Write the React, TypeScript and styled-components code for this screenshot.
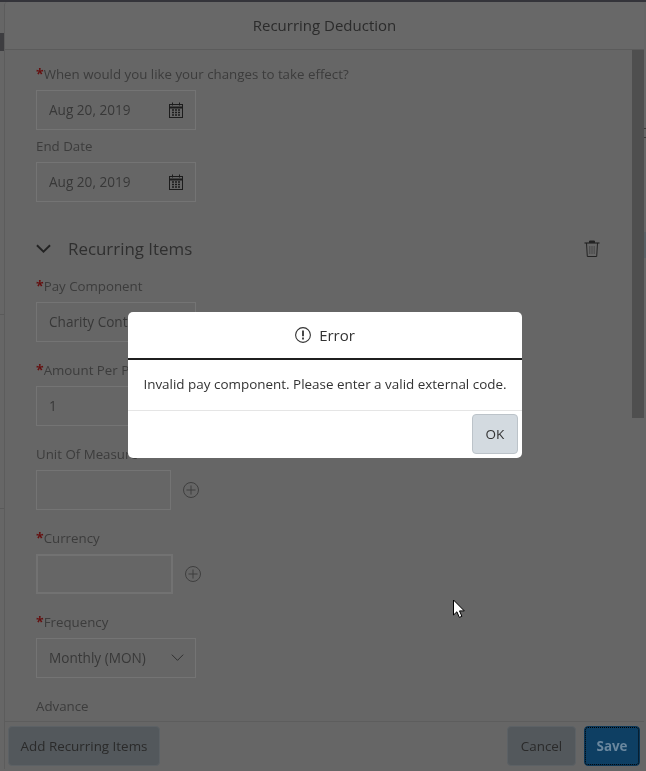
import styled, { createGlobalStyle } from "styled-components";

const GlobalStyle = createGlobalStyle`
    html, body {
        margin: 0;
        padding: 0;
        height: 100%;
        overflow: hidden;
    }
    body {
        font-family: "Open Sans", "Noto Sans", sans-serif;
        background-color: #666666;
    }
    * {
        box-sizing: border-box;
    }
`;

const Page = styled.div`
    position: relative;
    width: 646px;
    height: 771px;
    padding: 2px 2px 2px 4px;
    overflow: hidden;
    background:
        linear-gradient(#34343a, #34343a) 0 0 / 100% 2px no-repeat,
        linear-gradient(#3d3d40, #3d3d40) 0 33px / 4px 18px no-repeat,
        linear-gradient(#5a5a5a, #5a5a5a) 0 314px / 4px 1px no-repeat,
        linear-gradient(#5a5a5a, #5a5a5a) 0 508px / 4px 1px no-repeat,
        linear-gradient(#596064, #596064) 644px 232px / 2px 26px no-repeat,
        linear-gradient(#3a3a3a, #3a3a3a) 644px 128px / 2px 1px no-repeat,
        linear-gradient(#3a3a3a, #3a3a3a) 644px 137px / 2px 1px no-repeat,
        #666666;
`;

const Modal = styled.div`
    width: 640px;
    height: 767px;
    display: flex;
    flex-direction: column;
    background-color: #666666;
    border-left: 1px solid #5c5c5c;
    border-radius: 4px 4px 0 0;
    overflow: hidden;
    will-change: transform;
`;

const ModalHeader = styled.header`
    flex: none;
    height: 48px;
    padding-bottom: 2px;
    display: flex;
    align-items: center;
    justify-content: center;
    background-color: #686868;
    border-bottom: 1px solid #5b5b5b;
    color: #2b2b2b;
    font-size: 15px;
`;

const ModalMiddle = styled.div`
    flex: 1;
    min-height: 0;
    display: flex;
    overflow: hidden;
`;

const ModalBody = styled.div`
    flex: 1;
    min-width: 0;
    padding: 14px 32px 0 31px;
`;

const Scrollbar = styled.div`
    flex: none;
    width: 12px;
`;

const ScrollThumb = styled.div`
    height: 368px;
    background-color: #4f4f4f;
`;

const Field = styled.div<{ $gap?: number }>`
    display: flex;
    flex-direction: column;
    gap: 6px;
    margin-bottom: ${(p) => p.$gap ?? 18}px;
`;

const Label = styled.label`
    height: 20px;
    line-height: 20px;
    font-size: 13.3px;
    color: #3c3c3c;
`;

const Star = styled.span`
    color: #650f0f;
    font-weight: 700;
    font-size: 14px;
`;

const InputRow = styled.div`
    display: flex;
    align-items: center;
    gap: 12px;
`;

const Input = styled.div<{ $width?: number; $strong?: boolean }>`
    width: ${(p) => p.$width ?? 160}px;
    height: 40px;
    padding: 0 11px 1px 12px;
    display: flex;
    align-items: center;
    justify-content: space-between;
    border: ${(p) => (p.$strong ? "2px solid #727272" : "1px solid #747474")};
    font-size: 13.6px;
    color: #383838;
    white-space: nowrap;
    overflow: hidden;
`;

const SectionHeading = styled.div`
    height: 40px;
    margin: 27px 0 7px;
    padding-bottom: 2px;
    display: flex;
    align-items: center;
    justify-content: space-between;
`;

const SectionTitle = styled.div`
    display: flex;
    align-items: center;
    gap: 17px;
    font-size: 16.9px;
    color: #2f2f2f;
`;

const Footer = styled.footer`
    flex: none;
    height: 48px;
    padding: 4px 4px 3px 3px;
    display: flex;
    justify-content: space-between;
    border-top: 1px solid #5d5d5d;
`;

const ButtonGroup = styled.div`
    display: flex;
    gap: 8px;
`;

const Button = styled.div<{ $width: number; $primary?: boolean }>`
    width: ${(p) => p.$width}px;
    height: 40px;
    display: flex;
    align-items: center;
    justify-content: center;
    border-radius: 4px;
    font-size: 13.4px;
    white-space: nowrap;
    background-color: ${(p) => (p.$primary ? "#0e3f63" : "#53585c")};
    border: 1px solid ${(p) => (p.$primary ? "#0b3656" : "#5c6165")};
    color: ${(p) => (p.$primary ? "#6a879e" : "#2a2a2a")};
    font-weight: ${(p) => (p.$primary ? 700 : 400)};
    outline: ${(p) => (p.$primary ? "1px dotted #000000" : "none")};
    outline-offset: -2px;
`;

const Dialog = styled.div`
    position: absolute;
    left: 128px;
    top: 312px;
    width: 394px;
    height: 146px;
    display: flex;
    flex-direction: column;
    background-color: #ffffff;
    border-radius: 5px;
    overflow: hidden;
    will-change: transform;
`;

const DialogHeader = styled.div`
    flex: none;
    height: 48px;
    display: flex;
    align-items: center;
    justify-content: center;
    gap: 8px;
    border-bottom: 2px solid #1f1f1f;
    color: #333333;
    font-size: 15px;
`;

const DialogBody = styled.div`
    flex: none;
    height: 51px;
    padding-bottom: 2px;
    display: flex;
    align-items: center;
    justify-content: center;
    border-bottom: 1px solid #e5e5e5;
    color: #333333;
    font-size: 13.45px;
    white-space: nowrap;
`;

const DialogFooter = styled.div`
    flex: 1;
    padding: 3px 4px;
    display: flex;
    justify-content: flex-end;
`;

const OkButton = styled.div`
    width: 46px;
    height: 40px;
    display: flex;
    align-items: center;
    justify-content: center;
    background-color: #d3dae0;
    border: 1px solid #bcc3c9;
    border-radius: 4px;
    color: #333333;
    font-size: 13.5px;
`;

const Cursor = styled.svg`
    position: absolute;
    left: 452px;
    top: 599px;
`;

const CalendarIcon = () => (
    <svg width="16" height="16" viewBox="0 0 16 16" fill="none" stroke="#1c1c1c">
        <rect x="1.5" y="2.5" width="13" height="13" />
        <path d="M1.5 5.5h13" strokeWidth="2" />
        <path d="M4.5 0.5v3M11.5 0.5v3" />
        <path
            d="M4 8h2M7 8h2M10 8h2M4 10.5h2M7 10.5h2M10 10.5h2M4 13h2M7 13h2M10 13h2"
            strokeWidth="1.3"
        />
    </svg>
);

const TrashIcon = () => (
    <svg width="16" height="17" viewBox="0 0 16 17" fill="none" stroke="#232323">
        <path d="M0.5 3h15" strokeWidth="1.2" />
        <path d="M5.5 3V1h5v2" fill="#232323" />
        <path d="M2.5 3l0.8 13.5h9.4L13.5 3" />
        <path d="M5.8 6v8M8 6v8M10.2 6v8" strokeWidth="0.9" stroke="#444444" />
    </svg>
);

const PlusCircleIcon = () => (
    <svg width="16" height="16" viewBox="0 0 16 16" fill="none" stroke="#3f3f3f">
        <circle cx="8" cy="8" r="7.5" />
        <path d="M8 3.5v9M3.5 8h9" />
    </svg>
);

const ChevronIcon = ({ size, width, colour }: { size: number; width: number; colour: string }) => (
    <svg width={size} height={size} viewBox="0 0 16 16" fill="none" stroke={colour} strokeWidth={width}>
        <path d="M1 4.5l7 7 7-7" />
    </svg>
);

const AlertIcon = () => (
    <svg width="16" height="16" viewBox="0 0 16 16" fill="none" stroke="#333333">
        <circle cx="8" cy="8" r="7.4" strokeWidth="1.1" />
        <path d="M8 3.6v5.6" strokeWidth="1.8" />
        <path d="M8 10.6v1.8" strokeWidth="1.8" />
    </svg>
);

const App = () => {
    return (
        <Page>
            <GlobalStyle />
            <Modal>
                <ModalHeader>Recurring Deduction</ModalHeader>
                <ModalMiddle>
                    <ModalBody>
                        <Field $gap={6}>
                            <Label>
                                <Star>*</Star>When would you like your changes to take effect?
                            </Label>
                            <Input>
                                Aug 20, 2019
                                <CalendarIcon />
                            </Input>
                        </Field>
                        <Field $gap={0}>
                            <Label>End Date</Label>
                            <Input>
                                Aug 20, 2019
                                <CalendarIcon />
                            </Input>
                        </Field>
                        <SectionHeading>
                            <SectionTitle>
                                <ChevronIcon size={15} width={2} colour="#232323" />
                                Recurring Items
                            </SectionTitle>
                            <TrashIcon />
                        </SectionHeading>
                        <Field>
                            <Label>
                                <Star>*</Star>Pay Component
                            </Label>
                            <Input>Charity Contribution</Input>
                        </Field>
                        <Field>
                            <Label>
                                <Star>*</Star>Amount Per Payment
                            </Label>
                            <Input>1</Input>
                        </Field>
                        <Field>
                            <Label>Unit Of Measure</Label>
                            <InputRow>
                                <Input $width={135} />
                                <PlusCircleIcon />
                            </InputRow>
                        </Field>
                        <Field>
                            <Label>
                                <Star>*</Star>Currency
                            </Label>
                            <InputRow>
                                <Input $width={137} $strong />
                                <PlusCircleIcon />
                            </InputRow>
                        </Field>
                        <Field>
                            <Label>
                                <Star>*</Star>Frequency
                            </Label>
                            <Input>
                                Monthly (MON)
                                <ChevronIcon size={13} width={1.2} colour="#2f2f2f" />
                            </Input>
                        </Field>
                        <Field>
                            <Label>Advance</Label>
                        </Field>
                    </ModalBody>
                    <Scrollbar>
                        <ScrollThumb />
                    </Scrollbar>
                </ModalMiddle>
                <Footer>
                    <Button $width={152}>Add Recurring Items</Button>
                    <ButtonGroup>
                        <Button $width={69}>Cancel</Button>
                        <Button $width={56} $primary>
                            Save
                        </Button>
                    </ButtonGroup>
                </Footer>
            </Modal>
            <Dialog>
                <DialogHeader>
                    <AlertIcon />
                    Error
                </DialogHeader>
                <DialogBody>Invalid pay component. Please enter a valid external code.</DialogBody>
                <DialogFooter>
                    <OkButton>OK</OkButton>
                </DialogFooter>
            </Dialog>
            <Cursor width="14" height="20" viewBox="0 0 14 20">
                <path d="M1.5 1v15l3.4-3.2 2.4 5.6 2.6-1.1-2.4-5.4h4.8z" fill="#ffffff" stroke="#000000" strokeWidth="1" />
            </Cursor>
        </Page>
    );
};

export default App;
